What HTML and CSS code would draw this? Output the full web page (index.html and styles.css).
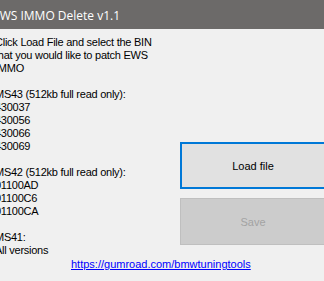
FILE: index.html
```html
<!DOCTYPE html>
<html>
<head>
<meta charset="utf-8">
<link rel="stylesheet" href="styles.css">
</head>
<body>
<div class="window">
  <div class="titlebar"><span class="title">EWS IMMO Delete v1.1</span></div>
  <div class="content">
    <div class="info">
      <div>Click Load File and select the BIN</div>
      <div>that you would like to patch EWS</div>
      <div>IMMO</div>
      <div class="blank">&nbsp;</div>
      <div>MS43 (512kb full read only):</div>
      <div>430037</div>
      <div>430056</div>
      <div>430066</div>
      <div>430069</div>
      <div class="blank">&nbsp;</div>
      <div>MS42 (512kb full read only):</div>
      <div>01100AD</div>
      <div>01100C6</div>
      <div>01100CA</div>
      <div class="blank">&nbsp;</div>
      <div>MS41:</div>
      <div>All versions</div>
    </div>
    <div class="actions">
      <button class="btn btn-load">Load file</button>
      <button class="btn btn-save" disabled>Save</button>
    </div>
  </div>
  <div class="linkrow"><a class="link" href="#">https://gumroad.com/bmwtuningtools</a></div>
</div>
</body>
</html>
```
FILE: styles.css
```css
html, body {
  margin: 0;
  padding: 0;
}
body {
  width: 324px;
  height: 281px;
  overflow: hidden;
  background: #f0f0f0;
}
.window {
  width: 324px;
  height: 281px;
  overflow: hidden;
  font-family: "Liberation Sans", Arial, sans-serif;
  font-size: 11px;
  color: #000;
}
.titlebar {
  height: 29px;
  background: #6c6a69;
  display: flex;
  align-items: center;
}
.title {
  font-family: "Open Sans", "Noto Sans", sans-serif;
  font-size: 12px;
  color: #ffffff;
  margin-left: -7px;
  white-space: nowrap;
  padding-top: 1px;
}
.content {
  display: flex;
  align-items: flex-start;
}
.info {
  margin-left: -5px;
  width: 185px;
  flex: none;
  padding-top: 7px;
  line-height: 13px;
  letter-spacing: -0.25px;
  white-space: nowrap;
}
.actions {
  flex: none;
  margin-top: 113px;
  display: flex;
  flex-direction: column;
  gap: 9px;
}
.btn {
  width: 146px;
  height: 47px;
  margin: 0;
  padding: 0;
  font-family: "Liberation Sans", Arial, sans-serif;
  font-size: 11px;
  box-sizing: border-box;
}
.btn-load {
  background: #e1e1e1;
  border: 2px solid #0078d7;
  color: #000;
}
.btn-save {
  background: #cccccc;
  border: 1px solid #bfbfbf;
  color: #a3a3a3;
}
.linkrow {
  padding-left: 71px;
  margin-top: 1px;
  line-height: 13px;
}
.link {
  color: #0000ff;
  text-decoration: underline;
}
```
